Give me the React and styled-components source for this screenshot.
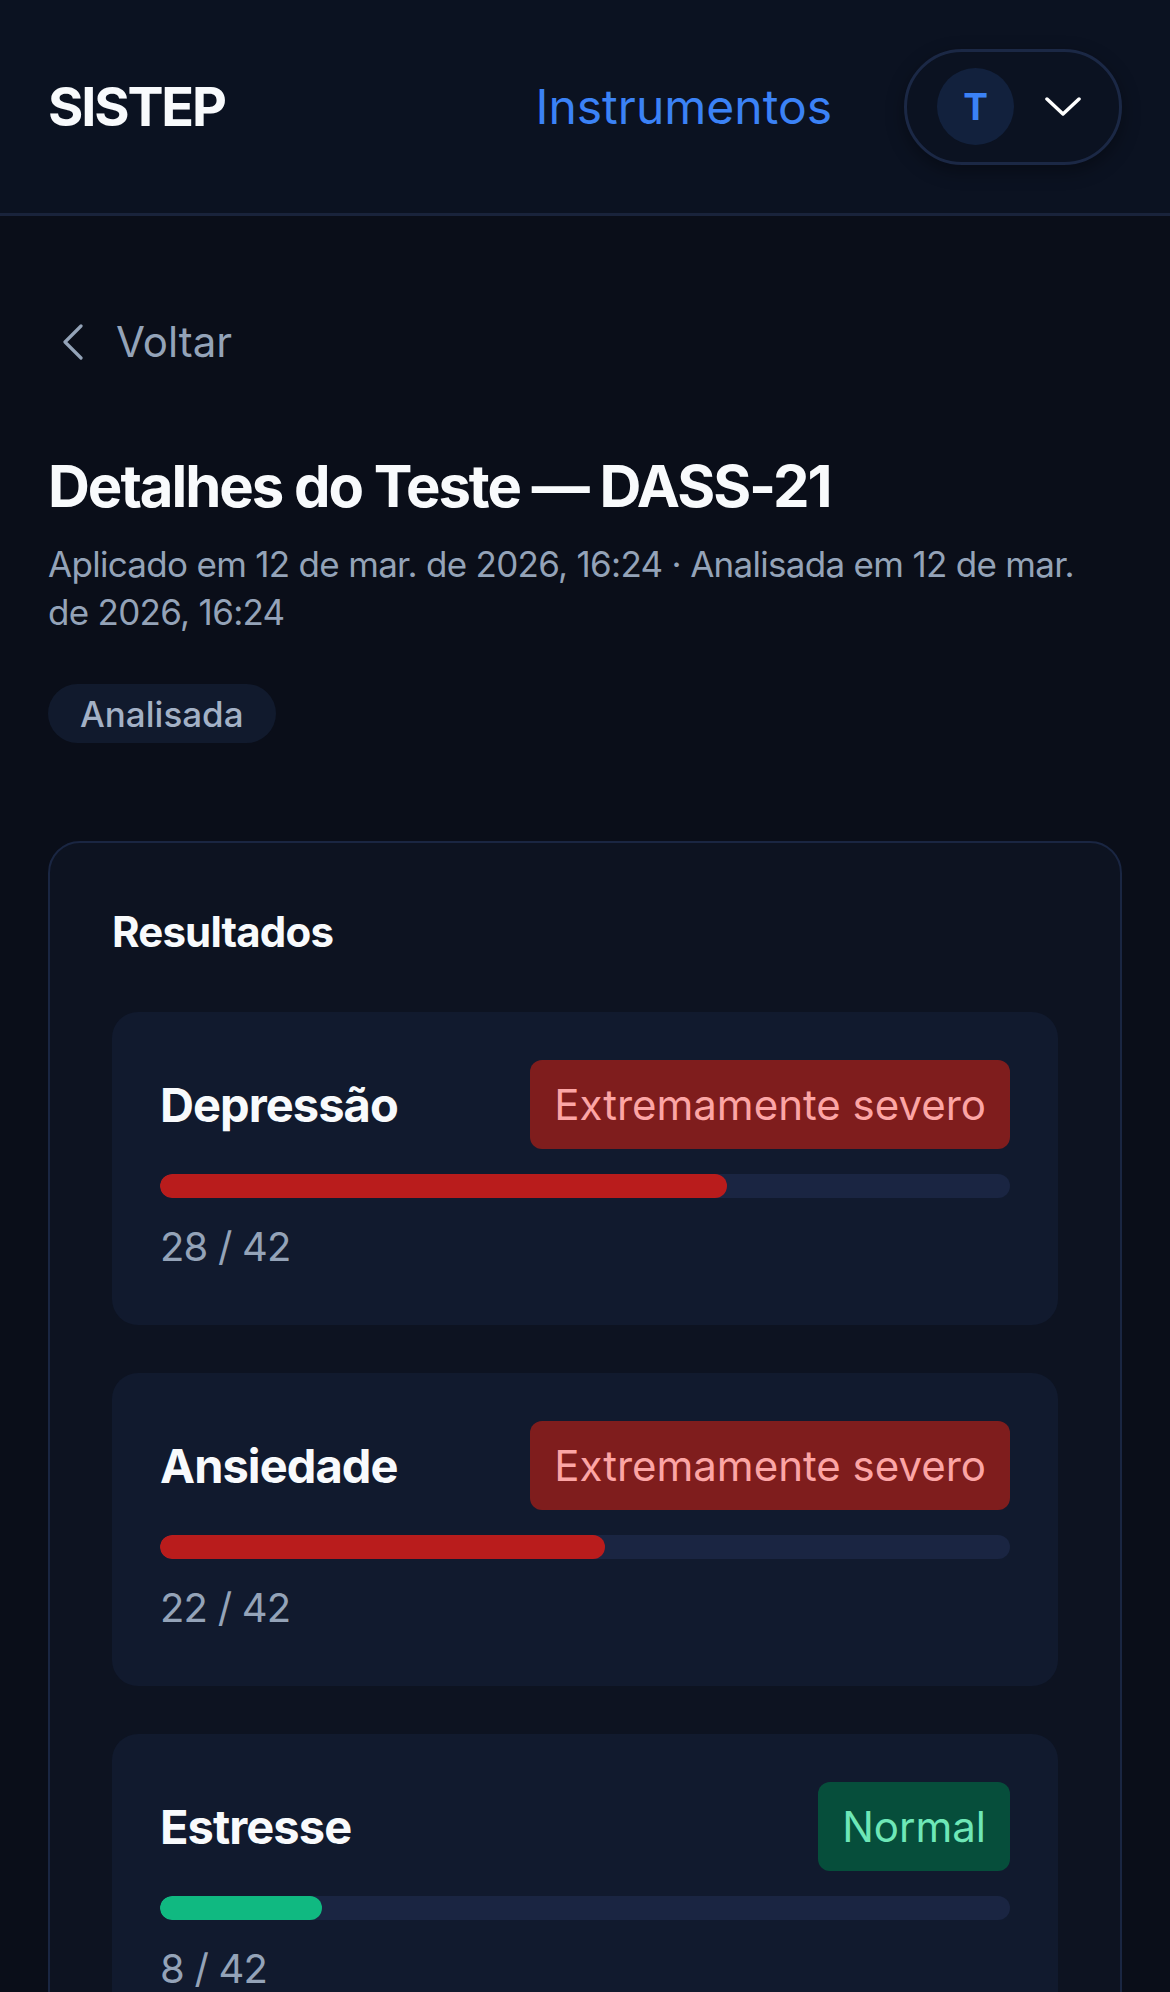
import React from 'react';
import styled, { createGlobalStyle } from 'styled-components';

const GlobalStyle = createGlobalStyle`
  html, body {
    margin: 0;
    padding: 0;
    background: #0a0e19;
  }
  body {
    font-family: Inter, "Noto Sans", "Liberation Sans", sans-serif;
    color: #f8fafc;
    -webkit-font-smoothing: antialiased;
  }
  * { box-sizing: border-box; }
`;

const Page = styled.div`
  min-height: 1992px;
  background: #0a0e19;
`;

const Header = styled.header`
  height: 216px;
  padding: 0 48px;
  display: flex;
  align-items: center;
  justify-content: space-between;
  background: #0b1221;
  border-bottom: 3px solid #19233b;
`;

const Brand = styled.div`
  font-size: 54px;
  font-weight: 700;
  letter-spacing: -0.04em;
  color: #f8fafc;
`;

const Nav = styled.nav`
  display: flex;
  align-items: center;
  gap: 72px;
`;

const NavLink = styled.a`
  font-size: 48px;
  font-weight: 400;
  color: #3b82f6;
  text-decoration: none;
`;

const UserButton = styled.button`
  display: flex;
  align-items: center;
  gap: 31px;
  height: 116px;
  padding: 0 38px 0 30px;
  border-radius: 999px;
  border: 3px solid #1b2845;
  background: #0b1221;
  box-shadow: 0 6px 18px rgba(0, 0, 0, 0.35);
  cursor: pointer;
`;

const Avatar = styled.span`
  width: 77px;
  height: 77px;
  border-radius: 50%;
  background: #12213d;
  color: #3b82f6;
  display: flex;
  align-items: center;
  justify-content: center;
  font-family: Inter, sans-serif;
  font-size: 37px;
  font-weight: 700;
`;

const Main = styled.main`
  padding: 96px 48px 0;
`;

const BackLink = styled.a`
  display: inline-flex;
  align-items: center;
  gap: 32px;
  padding-left: 14px;
  font-size: 42px;
  line-height: 59px;
  color: #94a3b8;
  text-decoration: none;
`;

const Title = styled.h1`
  margin: 80px 0 0;
  font-size: 58px;
  line-height: 70px;
  font-weight: 700;
  letter-spacing: -0.035em;
  color: #f8fafc;
`;

const Meta = styled.p`
  margin: 19px 0 0;
  font-size: 35px;
  line-height: 48px;
  color: #94a3b8;
  letter-spacing: -0.02em;
`;

const StatusPill = styled.span`
  display: inline-flex;
  align-items: center;
  height: 59px;
  margin-top: 48px;
  padding: 0 32px;
  border-radius: 999px;
  background: #111a2d;
  color: #a3b1c6;
  font-size: 35px;
  font-weight: 500;
`;

const Card = styled.section`
  margin-top: 98px;
  padding: 61px 62px 64px;
  border: 2px solid #1a2642;
  border-radius: 32px;
  background: #0d1321;
`;

const CardTitle = styled.h2`
  margin: 0;
  font-size: 42px;
  line-height: 56px;
  font-weight: 700;
  letter-spacing: -0.02em;
  color: #f8fafc;
`;

const ScaleList = styled.div`
  margin-top: 52px;
  display: flex;
  flex-direction: column;
  gap: 48px;
`;

const ScaleCard = styled.article`
  padding: 48px;
  border-radius: 26px;
  background: #111a2e;
`;

const ScaleHead = styled.div`
  display: flex;
  align-items: center;
  justify-content: space-between;
  gap: 24px;
`;

const ScaleName = styled.h3`
  margin: 0;
  font-size: 47px;
  font-weight: 700;
  letter-spacing: -0.02em;
  color: #f8fafc;
`;

const tones = {
  severe: { bg: '#7f1d1d', fg: '#fca5a5', bar: '#b91c1c' },
  normal: { bg: '#064e3b', fg: '#6ee7b7', bar: '#10b981' },
};

const Severity = styled.span`
  display: inline-flex;
  align-items: center;
  height: 89px;
  padding: 0 24px;
  border-radius: 12px;
  background: ${(p) => tones[p.$tone].bg};
  color: ${(p) => tones[p.$tone].fg};
  font-size: 42px;
`;

const Track = styled.div`
  margin-top: 25px;
  height: 24px;
  border-radius: 999px;
  background: #1a2542;
  overflow: hidden;
`;

const Fill = styled.div`
  height: 100%;
  border-radius: 999px;
  background: ${(p) => tones[p.$tone].bar};
`;

const Score = styled.div`
  margin-top: 19px;
  font-size: 40px;
  line-height: 60px;
  letter-spacing: -0.02em;
  color: #94a3b8;
`;

const ChevronDown = () => (
  <svg width="36" height="20" viewBox="0 0 36 20" fill="none">
    <path d="M2 2 L18 17 L34 2" stroke="#ffffff" strokeWidth="3.5" strokeLinecap="round" strokeLinejoin="round" />
  </svg>
);

const ChevronLeft = () => (
  <svg width="22" height="36" viewBox="0 0 22 36" fill="none">
    <path d="M19 2 L3 18 L19 34" stroke="#94a3b8" strokeWidth="3.2" strokeLinecap="round" strokeLinejoin="round" />
  </svg>
);

const scales = [
  { name: 'Depressão', level: 'Extremamente severo', tone: 'severe', score: 28 },
  { name: 'Ansiedade', level: 'Extremamente severo', tone: 'severe', score: 22 },
  { name: 'Estresse', level: 'Normal', tone: 'normal', score: 8 },
];

export default function App() {
  return (
    <>
      <GlobalStyle />
      <Page>
        <Header>
          <Brand>SISTEP</Brand>
          <Nav>
            <NavLink href="#">Instrumentos</NavLink>
            <UserButton>
              <Avatar>T</Avatar>
              <ChevronDown />
            </UserButton>
          </Nav>
        </Header>

        <Main>
          <BackLink href="#">
            <ChevronLeft />
            Voltar
          </BackLink>
          <Title>Detalhes do Teste — DASS-21</Title>
          <Meta>
            Aplicado em 12 de mar. de 2026, 16:24 · Analisada em 12 de mar. de 2026, 16:24
          </Meta>
          <StatusPill>Analisada</StatusPill>

          <Card>
            <CardTitle>Resultados</CardTitle>
            <ScaleList>
              {scales.map((s) => (
                <ScaleCard key={s.name}>
                  <ScaleHead>
                    <ScaleName>{s.name}</ScaleName>
                    <Severity $tone={s.tone}>{s.level}</Severity>
                  </ScaleHead>
                  <Track>
                    <Fill $tone={s.tone} style={{ width: `${(s.score / 42) * 100}%` }} />
                  </Track>
                  <Score>{s.score} / 42</Score>
                </ScaleCard>
              ))}
            </ScaleList>
          </Card>
        </Main>
      </Page>
    </>
  );
}
